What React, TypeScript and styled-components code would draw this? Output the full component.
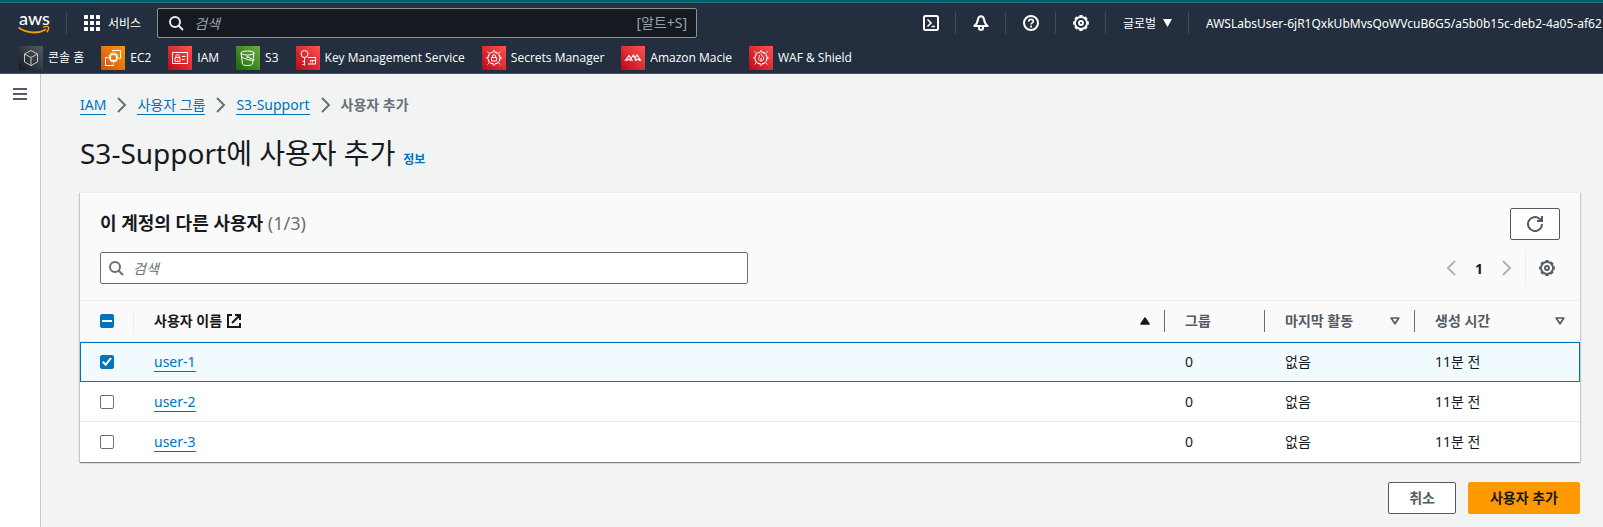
import React, { useEffect, useRef, useState } from "react";
import styled, { createGlobalStyle, css } from "styled-components";

const GlobalStyle = createGlobalStyle`
  * { box-sizing: border-box; }
  html, body { margin: 0; background: #f2f3f3; }
  body, button, input {
    font-family: "Noto Sans", "Noto Sans CJK KR", sans-serif;
  }
  body { font-size: 14px; line-height: 22px; color: #16191f; }
  svg { display: block; flex: none; }
  button { cursor: pointer; }
`;

/* ---------- global header ---------- */

const Header = styled.header`
  background: #232f3e;
  border-bottom: 1px solid #48525e;
  color: #fff;
  font-size: 12px;
  line-height: 16px;
`;

const TopStrip = styled.div`
  height: 3px;
  background: #065a6c;
  border-bottom: 1px solid #1c7c8c;
`;

const NavRow = styled.div`
  display: flex;
  align-items: center;
  height: 40px;
  overflow: hidden;
`;

const LogoLink = styled.a`
  padding: 0 14px 0 18px;
`;

const Divider = styled.span`
  flex: none;
  width: 1px;
  height: 22px;
  background: #414d5c;
`;

const NavButton = styled.button<{ $gap?: number }>`
  display: flex;
  flex: none;
  align-items: center;
  gap: ${(p) => p.$gap ?? 7}px;
  height: 32px;
  padding: 0 16px 0 17px;
  border: 0;
  background: none;
  color: #fff;
  font-size: 12px;
`;

const NavSearch = styled.label`
  display: flex;
  flex: 0 1 540px;
  align-items: center;
  gap: 10px;
  height: 30px;
  padding: 0 9px 0 10px;
  border: 1px solid #879596;
  border-radius: 2px;
  background: #16191f;
  color: #95a5a6;
  font-size: 14px;
`;

const NavSearchIcon = styled.span`
  color: #eaeded;
`;

const SearchInput = styled.input`
  flex: 1;
  min-width: 0;
  height: 22px;
  padding: 0;
  border: 0;
  outline: 0;
  background: none;
  color: inherit;
  font-size: 14px;
  &::placeholder {
    color: inherit;
    font-style: italic;
    opacity: 1;
  }
`;

const NavTools = styled.div`
  display: flex;
  flex: none;
  align-items: center;
  margin-left: auto;
`;

const Account = styled(NavButton)`
  width: 414px;
  overflow: hidden;
  white-space: nowrap;
`;

const Favorites = styled.nav`
  display: flex;
  gap: 17px;
  padding: 3px 19px;
  font-family: "Open Sans", "Noto Sans CJK KR", sans-serif;
`;

const Favorite = styled.a`
  display: flex;
  align-items: center;
  gap: 5px;
  color: #fff;
  text-decoration: none;
  white-space: nowrap;
`;

const Tile = styled.span<{ $from: string; $to: string }>`
  display: grid;
  place-items: center;
  width: 24px;
  height: 24px;
  background: linear-gradient(45deg, ${(p) => p.$from}, ${(p) => p.$to});
`;

/* ---------- page ---------- */

const Layout = styled.div`
  display: flex;
  align-items: stretch;
  min-height: calc(100vh - 74px);
`;

const SideRail = styled.aside`
  flex: none;
  width: 41px;
  border-right: 1px solid #c5cbcb;
  background: #fff;
`;

const MenuButton = styled.button`
  display: block;
  padding: 13px 12px;
  border: 0;
  background: none;
  color: #545b64;
`;

const Main = styled.main`
  flex: 1;
  min-width: 0;
  padding: 20px 23px 12px 39px;
`;

const Breadcrumbs = styled.ol`
  display: flex;
  align-items: center;
  gap: 10px;
  margin: 0;
  padding: 0;
  list-style: none;
`;

const Crumb = styled.li`
  display: flex;
  align-items: center;
  gap: 11px;
  color: #687078;
`;

const CurrentCrumb = styled.span`
  color: #687078;
  font-weight: 700;
`;

const TextLink = styled.a`
  display: inline-block;
  border-bottom: 1px solid #0073bb;
  color: #0073bb;
  line-height: 18px;
  text-decoration: none;
`;

const TitleRow = styled.div`
  display: flex;
  align-items: baseline;
  gap: 8px;
  padding: 19px 0 21px;
`;

const PageTitle = styled.h1`
  margin: 0;
  font-size: 28px;
  font-weight: 400;
  line-height: 36px;
`;

const InfoLink = styled.a`
  color: #0073bb;
  font-size: 12px;
  font-weight: 700;
  text-decoration: none;
`;

const Card = styled.section`
  border-top: 1px solid #eaeded;
  background: #fff;
  box-shadow: 0 1px 1px 0 rgba(0, 28, 36, 0.3), 1px 1px 1px 0 rgba(0, 28, 36, 0.15),
    -1px 1px 1px 0 rgba(0, 28, 36, 0.15);
`;

const CardHeader = styled.div`
  display: grid;
  gap: 12px;
  padding: 15px 20px 16px;
  background: #fafafa;
`;

const CardRow = styled.div`
  display: flex;
  align-items: center;
  justify-content: space-between;
`;

const CardTitle = styled.h2`
  margin: 0;
  padding-bottom: 2px;
  font-size: 18px;
  font-weight: 700;
  line-height: 22px;
`;

const Counter = styled.span`
  color: #687078;
  font-weight: 400;
`;

const Button = styled.button<{ $primary?: boolean; $icon?: boolean }>`
  display: inline-flex;
  align-items: center;
  justify-content: center;
  height: 32px;
  padding: 0 ${(p) => (p.$icon ? 16 : p.$primary ? 21 : 20)}px;
  border: 1px solid ${(p) => (p.$primary ? "#ff9900" : "#545b64")};
  border-radius: 2px;
  background: ${(p) => (p.$primary ? "#ff9900" : "#fff")};
  color: ${(p) => (p.$primary ? "#16191f" : "#545b64")};
  font-size: 14px;
  font-weight: 700;
  line-height: 20px;
`;

const FilterBox = styled.label`
  display: flex;
  align-items: center;
  gap: 9px;
  flex: 0 1 648px;
  height: 32px;
  padding: 0 7px;
  border: 1px solid #687078;
  border-radius: 2px;
  background: #fff;
  color: #687078;
`;

const Pager = styled.div`
  display: flex;
  align-items: center;
`;

const PagerButton = styled.button<{ $current?: boolean }>`
  display: grid;
  place-items: center;
  height: 32px;
  padding: 0 ${(p) => (p.$current ? 15 : 4)}px;
  border: 0;
  background: none;
  color: ${(p) => (p.$current ? "#16191f" : "#aab7b8")};
  font-size: 14px;
  font-weight: 700;
`;

const SettingsButton = styled.button`
  display: grid;
  place-items: center;
  height: 32px;
  margin-left: 9px;
  padding: 0 5px 0 13px;
  border: 0;
  border-left: 1px solid #eaeded;
  background: none;
  color: #545b64;
`;

const Table = styled.table`
  width: 100%;
  border-collapse: separate;
  border-spacing: 0;
  table-layout: fixed;
`;

const Col = styled.col<{ $width?: number }>`
  ${(p) => p.$width && `width: ${p.$width}px;`}
`;

const Th = styled.th<{ $sorted?: boolean }>`
  height: 42px;
  padding: 0;
  border-top: 1px solid #eaeded;
  border-bottom: 1px solid #eaeded;
  background: #fafafa;
  color: ${(p) => (p.$sorted ? "#16191f" : "#545b64")};
  font-weight: 700;
  text-align: left;
`;

const HeadCell = styled.div<{ $divider?: string }>`
  display: flex;
  align-items: center;
  justify-content: space-between;
  height: 22px;
  padding: 0 14px 0 20px;
  border-right: 1px solid ${(p) => p.$divider ?? "transparent"};
`;

const HeadLabel = styled.span`
  display: flex;
  align-items: center;
  gap: 5px;
`;

const Row = styled.tr<{ $selected: boolean }>`
  & > td {
    height: 40px;
    padding: 0 20px;
    border-bottom: 1px solid #eaeded;
  }
  &:last-child > td {
    border-bottom-color: transparent;
  }
  ${(p) =>
    p.$selected &&
    css`
      & > td {
        border-top: 1px solid #0073bb;
        border-bottom-color: #0073bb;
        background: #f1faff;
      }
      & > td:first-child {
        padding-left: 19px;
        border-left: 1px solid #0073bb;
      }
      & > td:last-child {
        border-right: 1px solid #0073bb;
      }
    `}
`;

const CheckInput = styled.input`
  appearance: none;
  display: grid;
  place-items: center;
  width: 14px;
  height: 14px;
  margin: 0;
  border: 1px solid #687078;
  border-radius: 2px;
  background: #fff;
  &:checked,
  &:indeterminate {
    border-color: #0073bb;
    background: #0073bb;
  }
  &:checked::after {
    content: "";
    width: 10px;
    height: 10px;
    background: #fff;
    clip-path: polygon(0 55%, 14% 40%, 36% 62%, 82% 4%, 98% 16%, 38% 92%);
  }
  &:indeterminate::after {
    content: "";
    width: 10px;
    height: 2px;
    background: #fff;
    clip-path: none;
  }
`;

const Actions = styled.div`
  display: flex;
  justify-content: flex-end;
  gap: 12px;
  padding-top: 20px;
`;

/* ---------- icons ---------- */

const SearchIcon = () => (
  <svg width="16" height="16" viewBox="0 0 16 16" fill="none" stroke="currentColor" strokeWidth="2">
    <circle cx="7" cy="7" r="5" />
    <path d="M10.5 10.5 15 15" />
  </svg>
);

const GearIcon = () => (
  <svg width="16" height="16" viewBox="0 0 16 16" fill="none" stroke="currentColor">
    <circle cx="8" cy="8" r="6" strokeWidth="1.8" />
    <circle cx="8" cy="8" r="7.1" strokeWidth="1.6" pathLength="80" strokeDasharray="6 4" strokeDashoffset="3" />
    <circle cx="8" cy="8" r="2" strokeWidth="1.9" />
  </svg>
);

const Chevron = ({ left = false }: { left?: boolean }) => (
  <svg width="10" height="16" viewBox="0 0 10 16" fill="none" stroke="currentColor" strokeWidth="2">
    <path d={left ? "M9 1 2 8l7 7" : "M1 1l7 7-7 7"} />
  </svg>
);

const AwsLogo = () => (
  <svg width="34" height="36" viewBox="0 -6 34 36">
    <text x="1" y="14" fontFamily="Lato, sans-serif" fontSize="18" fontWeight="500" fill="#fff">aws</text>
    <path d="M.5 16.500c8 6 19.500 6.500 27.500 2" fill="none" stroke="#ff9900" strokeWidth="1.800" />
    <path d="M25 16.300c2.500-.9 5-.9 5.500-.3s-.2 3.500-1.800 5.200" fill="none" stroke="#ff9900" strokeWidth="1.400" />
  </svg>
);

const GridIcon = () => (
  <svg width="16" height="16" viewBox="0 0 16 16" fill="#fff">
    {[0, 6, 12].map((y) => [0, 6, 12].map((x) => <rect key={`${x}-${y}`} x={x} y={y} width="4" height="4" rx=".5" />))}
  </svg>
);

const ShellIcon = () => (
  <svg width="16" height="16" viewBox="0 0 16 16" fill="none" stroke="#fff" strokeWidth="2">
    <rect x="1" y="1" width="14" height="14" rx="1.500" />
    <path d="M4.500 4.500 8 8l-3.500 3.500M8.500 11.500h3.500" strokeWidth="1.700" />
  </svg>
);

const BellIcon = () => (
  <svg width="16" height="16" viewBox="0 0 16 16" fill="none" stroke="#fff" strokeWidth="2" strokeLinejoin="round">
    <path d="M8 1.200c-1.700 0-2.600 1.100-2.900 2.800C4.600 7 4 9 1.300 11h13.400C12 9 11.400 7 10.900 4 10.600 2.300 9.700 1.200 8 1.200z" />
    <path d="M6 11.500v1.700c0 2.200 4 2.200 4 0v-1.700" />
  </svg>
);

const HelpIcon = () => (
  <svg width="16" height="16" viewBox="0 0 16 16" fill="none" stroke="#fff" strokeWidth="2">
    <circle cx="8" cy="8" r="7" />
    <path d="M5.700 6.600C5.600 3.600 10.300 3.600 10.300 6.300 10.300 8 8 7.800 8 9.600" strokeWidth="1.700" />
    <path d="M8 10.800v1.700" />
  </svg>
);

const MenuIcon = () => (
  <svg width="16" height="16" viewBox="0 0 16 16" stroke="currentColor" strokeWidth="2">
    <path d="M1 2h14M1 7h14M1 12h14" />
  </svg>
);

const RefreshIcon = () => (
  <svg width="16" height="16" viewBox="0 0 16 16" fill="none" stroke="currentColor" strokeWidth="2">
    <path d="M15 8A7 7 0 1 1 12.500 2.700L14.500 4.500" />
    <path d="M15 0v5h-5" />
  </svg>
);

const ExternalIcon = () => (
  <svg width="14" height="14" viewBox="0 0 14 14" fill="none" stroke="currentColor" strokeWidth="2">
    <path d="M5 1H1v12h12V9M8 1h5v5M13 1 5 9" />
  </svg>
);

const SortIcon = ({ active = false }: { active?: boolean }) => (
  <svg width="10" height="8" viewBox="0 0 10 8" stroke="currentColor" strokeLinejoin="round">
    {active ? (
      <path d="M1 7h8L5 1z" fill="currentColor" strokeWidth="1.500" />
    ) : (
      <path d="M1.200 1h7.600L5 6.800z" fill="none" strokeWidth="1.700" />
    )}
  </svg>
);

const Line = ({ children }: { children: React.ReactNode }) => (
  <svg width="18" height="18" viewBox="0 0 18 18" fill="none" stroke="#fff" strokeWidth="1">
    {children}
  </svg>
);

const CubeDrawing = () => (
  <Line>
    <path d="M9 1.500 15.500 5v8L9 16.500 2.500 13V5zM2.500 5 9 8.500 15.500 5M9 8.500v8" stroke="#c4c9d0" />
  </Line>
);

const ChipDrawing = () => (
  <Line>
    <path d="M6.500 5.500h6v6h-6z" strokeWidth="1.300" />
    <path d="M8 3.500v2M9.500 3.500v2M11 3.500v2M8 11.500v2M9.500 11.500v2M11 11.500v2M4.500 7h2M4.500 8.500h2M4.500 10h2M12.500 7h2M12.500 8.500h2M12.500 10h2" />
    <path d="M8.500 2.500V1.500h8v8H15M4 8.500H1.500v8h8V14.500" />
  </Line>
);

const IdDrawing = () => (
  <Line>
    <path d="M1.500 3.500h15v11h-15zM4 8.500h5v4H4zM5 8.500V7c0-2 3-2 3 0v1.500M11 7.500h3.500M11 10.500h2.500M6.500 10v1.500" />
  </Line>
);

const BucketDrawing = () => (
  <Line>
    <ellipse cx="8.500" cy="4" rx="6.500" ry="2" />
    <path d="M2 4l1.500 11c1 2 9 2 10 0L15 4M3 8c3 2.500 8 3.500 12.500 3M9 8l4 2" />
    <circle cx="8.500" cy="8" r=".8" />
  </Line>
);

const KeyDrawing = () => (
  <Line>
    <circle cx="5.500" cy="5" r="3.500" />
    <path d="M5.500 8.500v8M5.500 12.500h-2M5.500 15.500h-2M9 8.500h7.500v6.500H9M11.500 11.500h5M11.500 11.500v2M13.500 11.500v2" />
  </Line>
);

const ShieldRing = ({ children }: { children: React.ReactNode }) => (
  <Line>
    <circle cx="9" cy="9" r="6" strokeWidth="1.200" strokeDasharray="3.700 1" />
    <path d="M9 1v2M9 15v2M1 9h2M15 9h2M2.500 2.500l2.200 2.200M13.300 13.300l2.200 2.200M2.500 15.500l2.200-2.200M13.300 4.700l2.200-2.200" />
    {children}
  </Line>
);

const SecretsDrawing = () => (
  <ShieldRing>
    <path d="M6.500 8.500h5v3.500h-5zM7.500 8.500V7c0-1.800 3-1.800 3 0v1.500" />
  </ShieldRing>
);

const WafDrawing = () => (
  <ShieldRing>
    <path d="M9 5c.5 2 3 2.500 2.500 5.200-.4 2.300-4.600 2.300-5 0C6.200 8.500 8 8 7.500 6M9 9v3" />
  </ShieldRing>
);

const MacieDrawing = () => (
  <Line>
    <path d="M1 12 5 6.500 8.500 12M3 12c.3-2.500 3.200-2.500 3.500 0M7 9.500 9.500 6l2.500 6M10.500 9.500 13 6l4 6M12 12c.3-2.500 3.200-2.500 3.500 0" strokeWidth="1.200" />
  </Line>
);

/* ---------- data ---------- */

const red = { from: "#bd0816", to: "#ff5252" };

const favorites = [
  { label: "콘솔 홈", from: "#16191f", to: "#545b64", icon: <CubeDrawing /> },
  { label: "EC2", from: "#c8511b", to: "#ff9900", icon: <ChipDrawing /> },
  { label: "IAM", ...red, icon: <IdDrawing /> },
  { label: "S3", from: "#1b660f", to: "#6cae3e", icon: <BucketDrawing /> },
  { label: "Key Management Service", ...red, icon: <KeyDrawing /> },
  { label: "Secrets Manager", ...red, icon: <SecretsDrawing /> },
  { label: "Amazon Macie", ...red, icon: <MacieDrawing /> },
  { label: "WAF & Shield", ...red, icon: <WafDrawing /> },
];

const tools = [
  { label: "CloudShell", icon: <ShellIcon /> },
  { label: "알림", icon: <BellIcon /> },
  { label: "도움말", icon: <HelpIcon /> },
  { label: "설정", icon: <GearIcon /> },
];

const crumbs = ["IAM", "사용자 그룹", "S3-Support"];

const users = [
  { name: "user-1", groups: 0, activity: "없음", created: "11분 전" },
  { name: "user-2", groups: 0, activity: "없음", created: "11분 전" },
  { name: "user-3", groups: 0, activity: "없음", created: "11분 전" },
];

export default function App() {
  const [selected, setSelected] = useState<string[]>(["user-1"]);
  const allRef = useRef<HTMLInputElement>(null);
  const all = selected.length === users.length;

  useEffect(() => {
    if (allRef.current) allRef.current.indeterminate = selected.length > 0 && !all;
  }, [selected, all]);

  const toggle = (name: string) =>
    setSelected((s) => (s.includes(name) ? s.filter((n) => n !== name) : [...s, name]));

  return (
    <>
      <GlobalStyle />
      <Header>
        <TopStrip />
        <NavRow>
          <LogoLink href="#" aria-label="AWS">
            <AwsLogo />
          </LogoLink>
          <Divider />
          <NavButton $gap={8}>
            <GridIcon />
            서비스
          </NavButton>
          <NavSearch>
            <NavSearchIcon>
              <SearchIcon />
            </NavSearchIcon>
            <SearchInput type="text" placeholder="검색" aria-label="검색" />
            <span>[알트+S]</span>
          </NavSearch>
          <NavTools>
            {tools.map((t) => (
              <React.Fragment key={t.label}>
                <NavButton aria-label={t.label}>{t.icon}</NavButton>
                <Divider />
              </React.Fragment>
            ))}
            <NavButton>
              글로벌
              <svg width="9" height="8" viewBox="0 0 9 8" fill="#fff">
                <path d="M0 0h9L4.500 8z" />
              </svg>
            </NavButton>
            <Divider />
            <Account>AWSLabsUser-6jR1QxkUbMvsQoWVcuB6G5/a5b0b15c-deb2-4a05-af62</Account>
          </NavTools>
        </NavRow>
        <Favorites>
          {favorites.map((f) => (
            <Favorite key={f.label} href="#">
              <Tile $from={f.from} $to={f.to}>{f.icon}</Tile>
              {f.label}
            </Favorite>
          ))}
        </Favorites>
      </Header>
      <Layout>
        <SideRail>
          <MenuButton aria-label="메뉴">
            <MenuIcon />
          </MenuButton>
        </SideRail>
        <Main>
          <nav>
            <Breadcrumbs>
              {crumbs.map((c) => (
                <Crumb key={c}>
                  <TextLink href="#">{c}</TextLink>
                  <Chevron />
                </Crumb>
              ))}
              <Crumb>
                <CurrentCrumb>사용자 추가</CurrentCrumb>
              </Crumb>
            </Breadcrumbs>
          </nav>
          <TitleRow>
            <PageTitle>S3-Support에 사용자 추가</PageTitle>
            <InfoLink href="#">정보</InfoLink>
          </TitleRow>
          <Card>
            <CardHeader>
              <CardRow>
                <CardTitle>
                  이 계정의 다른 사용자 <Counter>(1/3)</Counter>
                </CardTitle>
                <Button $icon aria-label="새로 고침">
                  <RefreshIcon />
                </Button>
              </CardRow>
              <CardRow>
                <FilterBox>
                  <SearchIcon />
                  <SearchInput type="text" placeholder="검색" aria-label="사용자 검색" />
                </FilterBox>
                <Pager>
                  <PagerButton aria-label="이전">
                    <Chevron left />
                  </PagerButton>
                  <PagerButton $current>1</PagerButton>
                  <PagerButton aria-label="다음">
                    <Chevron />
                  </PagerButton>
                  <SettingsButton aria-label="기본 설정">
                    <GearIcon />
                  </SettingsButton>
                </Pager>
              </CardRow>
            </CardHeader>
            <Table>
              <colgroup>
                <Col $width={54} />
                <Col />
                <Col $width={100} />
                <Col $width={150} />
                <Col $width={165} />
              </colgroup>
              <thead>
                <tr>
                  <Th>
                    <HeadCell $divider="#eaeded">
                      <CheckInput
                        ref={allRef}
                        type="checkbox"
                        aria-label="모두 선택"
                        checked={all}
                        onChange={() => setSelected(all ? [] : users.map((u) => u.name))}
                      />
                    </HeadCell>
                  </Th>
                  <Th $sorted>
                    <HeadCell $divider="#687078">
                      <HeadLabel>
                        사용자 이름
                        <ExternalIcon />
                      </HeadLabel>
                      <SortIcon active />
                    </HeadCell>
                  </Th>
                  <Th>
                    <HeadCell $divider="#687078">그룹</HeadCell>
                  </Th>
                  <Th>
                    <HeadCell $divider="#687078">
                      마지막 활동
                      <SortIcon />
                    </HeadCell>
                  </Th>
                  <Th>
                    <HeadCell>
                      생성 시간
                      <SortIcon />
                    </HeadCell>
                  </Th>
                </tr>
              </thead>
              <tbody>
                {users.map((u) => (
                  <Row key={u.name} $selected={selected.includes(u.name)}>
                    <td>
                      <CheckInput
                        type="checkbox"
                        aria-label={u.name}
                        checked={selected.includes(u.name)}
                        onChange={() => toggle(u.name)}
                      />
                    </td>
                    <td>
                      <TextLink href="#">{u.name}</TextLink>
                    </td>
                    <td>{u.groups}</td>
                    <td>{u.activity}</td>
                    <td>{u.created}</td>
                  </Row>
                ))}
              </tbody>
            </Table>
          </Card>
          <Actions>
            <Button>취소</Button>
            <Button $primary>사용자 추가</Button>
          </Actions>
        </Main>
      </Layout>
    </>
  );
}
